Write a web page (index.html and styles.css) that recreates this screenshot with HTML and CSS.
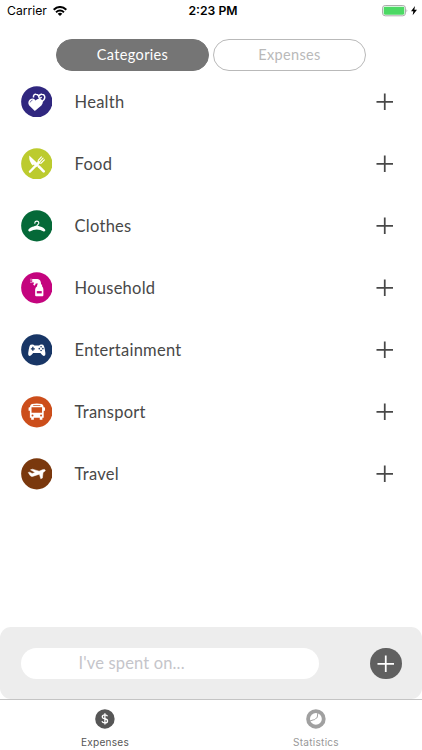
FILE: index.html
```html
<!DOCTYPE html>
<html lang="en">
<head>
<meta charset="utf-8">
<title>Expenses</title>
<link rel="stylesheet" href="styles.css">
</head>
<body>
<div class="app">
  <header class="status">
    <div class="carrier"><span>Carrier</span>
      <svg class="wifi" viewBox="0 0 42 30"><g fill="none" stroke="#000" stroke-width="6"><path d="M2 11Q21-5 40 11"/><path d="M9 18.500Q21 8 33 18.500"/></g><path d="M14 23Q21 17 28 23L21 30Z"/></svg>
    </div>
    <div class="time">2:23 PM</div>
    <div class="power">
      <svg class="battery" viewBox="0 0 78 34"><rect x="1.5" y="1.5" width="69" height="31" rx="8" fill="#fff" stroke="#999" stroke-width="2.5"/><rect x="5" y="5" width="62" height="24" rx="4" fill="#4cd964"/><path d="M74 12Q78 17 74 22Z" fill="#999"/></svg>
      <svg class="bolt" viewBox="0 0 18 28"><path d="M12 0L0 16H7L5 28L18 11H10Z"/></svg>
    </div>
  </header>
  <nav class="segments">
    <button class="segment active">Categories</button>
    <button class="segment">Expenses</button>
  </nav>
  <main class="list">
    <div class="row"><svg class="icon" viewBox="0 0 96 96"><circle cx="48" cy="48" r="47.5" fill="#30277f"/><path d="M38 35V30Q40 24 46 25Q51 25 54 31Q58 24 64 25C73 26 74 35 70 41L62 49" fill="none" stroke="#fff" stroke-width="4.5"/><path d="M53 30L56 38L63 34" fill="none" stroke="#fff" stroke-width="4"/><path d="M42 76L25 59C19 51 24 38 35 38Q41 38 44 44Q50 37 58 39C68 43 68 53 62 59Z" fill="#fff"/><path d="M28 50Q29 44 35 43" fill="none" stroke="#30277f" stroke-width="2"/></svg><span class="name">Health</span><svg class="plus" viewBox="0 0 18 18"><path d="M9 .5V17.5M.5 9H17.5"/></svg></div>
    <div class="row"><svg class="icon" viewBox="0 0 96 96"><circle cx="48" cy="48" r="47.5" fill="#bccb2e"/><g fill="none" stroke="#fff" stroke-linecap="round"><path d="M27 72L55 43" stroke-width="7"/><path d="M52 39Q51 48 61 46L71 36M53 37L62 27M58 41L67 31" stroke-width="3.4"/><path d="M54 56L69 71" stroke-width="8"/></g><path d="M25 23L55 51L48 58L39 50L36 53Q24 43 25 23Z" fill="#fff"/></svg><span class="name">Food</span><svg class="plus" viewBox="0 0 18 18"><path d="M9 .5V17.5M.5 9H17.5"/></svg></div>
    <div class="row"><svg class="icon" viewBox="0 0 96 96"><circle cx="48" cy="48" r="47.5" fill="#056938"/><path d="M42 40C42 31 55 32 54 40C53 45 48 44 48 50" fill="none" stroke="#fff" stroke-width="3.5" stroke-linecap="round"/><path d="M45 48H51C59 51 71 53 74 61Q74 66 69 65Q48 53 27 65Q22 66 22 61C25 53 37 51 45 48Z" fill="#fff"/></svg><span class="name">Clothes</span><svg class="plus" viewBox="0 0 18 18"><path d="M9 .5V17.5M.5 9H17.5"/></svg></div>
    <div class="row"><svg class="icon" viewBox="0 0 96 96"><circle cx="48" cy="48" r="47.5" fill="#c4047e"/><path d="M34 21H50Q61 22 61 38H64V43Q68 47 68 53V71Q68 74 65 74H46Q43 74 43 71V53Q43 47 49 43V38H51V35H45L42 42L37 39L40 32H34Z" fill="#fff"/><path d="M48 58H63V65H48Z" fill="#c4047e"/><path d="M29 22H32M29 27H32M29 32H32" stroke="#fff" stroke-width="3"/></svg><span class="name">Household</span><svg class="plus" viewBox="0 0 18 18"><path d="M9 .5V17.5M.5 9H17.5"/></svg></div>
    <div class="row"><svg class="icon" viewBox="0 0 96 96"><circle cx="48" cy="48" r="47.5" fill="#183666"/><path d="M29 33Q37 30 41 35H55Q59 30 67 33Q71 35 74 57Q75 67 69 67Q66 67 59 58H37Q30 67 27 67Q21 67 22 57Q25 35 29 33Z" fill="#fff"/><g fill="#183666"><path d="M34 39H38V43H42V47H38V51H34V47H30V43H34Z"/><circle cx="61" cy="39" r="2.4"/><circle cx="61" cy="50" r="2.4"/><circle cx="55.5" cy="44.5" r="2.4"/><circle cx="66.500" cy="44.5" r="2.4"/></g></svg><span class="name">Entertainment</span><svg class="plus" viewBox="0 0 18 18"><path d="M9 .5V17.5M.5 9H17.5"/></svg></div>
    <div class="row"><svg class="icon" viewBox="0 0 96 96"><circle cx="48" cy="48" r="47.5" fill="#cc4e1b"/><path d="M33 24Q48 21 63 24Q68 25 69 34H71Q73 34 73 37V45H69V66H65V72H57V66H39V72H31V66H27V45H23V37Q23 34 25 34H27Q28 25 33 24Z" fill="#fff"/><g fill="#cc4e1b"><path d="M37 27H59V30H37ZM32 34H64V51H32Z"/><circle cx="35" cy="59" r="3"/><circle cx="61" cy="59" r="3"/></g></svg><span class="name">Transport</span><svg class="plus" viewBox="0 0 18 18"><path d="M9 .5V17.5M.5 9H17.5"/></svg></div>
    <div class="row"><svg class="icon" viewBox="0 0 96 96"><circle cx="48" cy="48" r="47.5" fill="#7a380d"/><path d="M22 44L26 43L34 47L43 44L29 36L35 34L55 40L65 36Q73 33 74 37Q74 40 67 44L65 61L60 63L56 49L35 56Q29 57 27 52Z" fill="#fff" stroke="#fff" stroke-width="1.5"/></svg><span class="name">Travel</span><svg class="plus" viewBox="0 0 18 18"><path d="M9 .5V17.5M.5 9H17.5"/></svg></div>
  </main>
  <section class="composer">
    <div class="field">I've spent on...</div>
    <button class="add"><svg class="plus light" viewBox="0 0 18 18"><path d="M9 .5V17.5M.5 9H17.5"/></svg></button>
  </section>
  <footer class="tabs">
    <div class="tab selected"><svg class="tab-icon" viewBox="0 0 60 60"><circle cx="30" cy="30" r="29.5" fill="#565656"/><path d="M38 22Q36 18 30 18Q22 18 22 24C22 32 38 27 38 36Q38 42 30 42Q23 42 21 37M30 13V47" fill="none" stroke="#fff" stroke-width="4"/></svg><span>Expenses</span></div>
    <div class="tab"><svg class="tab-icon" viewBox="0 0 60 60"><circle cx="30" cy="30" r="29.5" fill="#a0a0a0"/><circle cx="30" cy="30" r="18" fill="#fff"/><path d="M10 37L22 33Q26 34 29 29L34 26L36 11" fill="none" stroke="#a0a0a0" stroke-width="3"/></svg><span>Statistics</span></div>
  </footer>
</div>
</body>
</html>
```
FILE: styles.css
```css
* { box-sizing: border-box; }
body { margin: 0; background: #fff; font-family: Lato, "Open Sans", sans-serif; color: #484848; }
button { padding: 0; border: 0; font: inherit; }
svg { display: block; flex: none; }
.app { width: 422px; height: 750px; display: flex; flex-direction: column; overflow: hidden; }
.status { height: 22px; display: grid; grid-template-columns: 1fr auto 1fr; align-items: center; padding: 0 5px 0 7px; font: 12.2px/22px Inter, sans-serif; color: #000; }
.carrier { display: flex; align-items: center; gap: 6px; }
.wifi { width: 14px; height: 10px; }
.time { font-weight: 600; padding-left: 2px; }
.power { display: flex; justify-content: flex-end; align-items: center; gap: 3px; }
.battery { width: 26px; height: 11.3px; }
.bolt { width: 6px; height: 9.3px; }
.segments { display: flex; justify-content: center; gap: 4px; margin-top: 17px; }
.segment { width: 153px; height: 31.5px; border: 1px solid #b9b9b9; border-radius: 16px; background: #fff; color: #b9b9b9; font-size: 14.5px; letter-spacing: 0.35px; }
.segment.active { background: #757575; border-color: #757575; color: #fff; }
.list { flex: 1; }
.row { height: 62.1px; display: flex; align-items: center; padding: 0 29px 0 20.5px; }
.icon { width: 31.6px; height: 31.6px; }
.name { flex: 1; margin-left: 22.5px; font-size: 16.5px; line-height: 24px; letter-spacing: 0.25px; }
.plus { width: 17.5px; height: 17.5px; fill: none; stroke: #484848; stroke-width: 1.8; }
.plus.light { stroke: #fff; }
.composer { height: 72px; display: flex; align-items: center; justify-content: space-between; padding: 0 20.5px; background: #ededed; border-radius: 11px; }
.field { width: 298.5px; height: 31.5px; padding-left: 58px; border-radius: 16px; background: #fff; color: #c5c5ca; font-size: 16.5px; line-height: 31px; letter-spacing: 0.15px; }
.add { width: 31.5px; height: 31.5px; display: grid; place-items: center; border-radius: 50%; background: #606060; }
.tabs { height: 50.7px; display: flex; border-top: 1px solid #c4c4c4; }
.tab { flex: 1; display: flex; flex-direction: column; align-items: center; padding-top: 8.7px; padding-right: 1px; color: #989898; font: 10.1px/14px Inter, sans-serif; letter-spacing: 0.25px; }
.tab.selected { color: #565656; }
.tab-icon { width: 19.8px; height: 19.8px; margin-bottom: 6.5px; }
```
